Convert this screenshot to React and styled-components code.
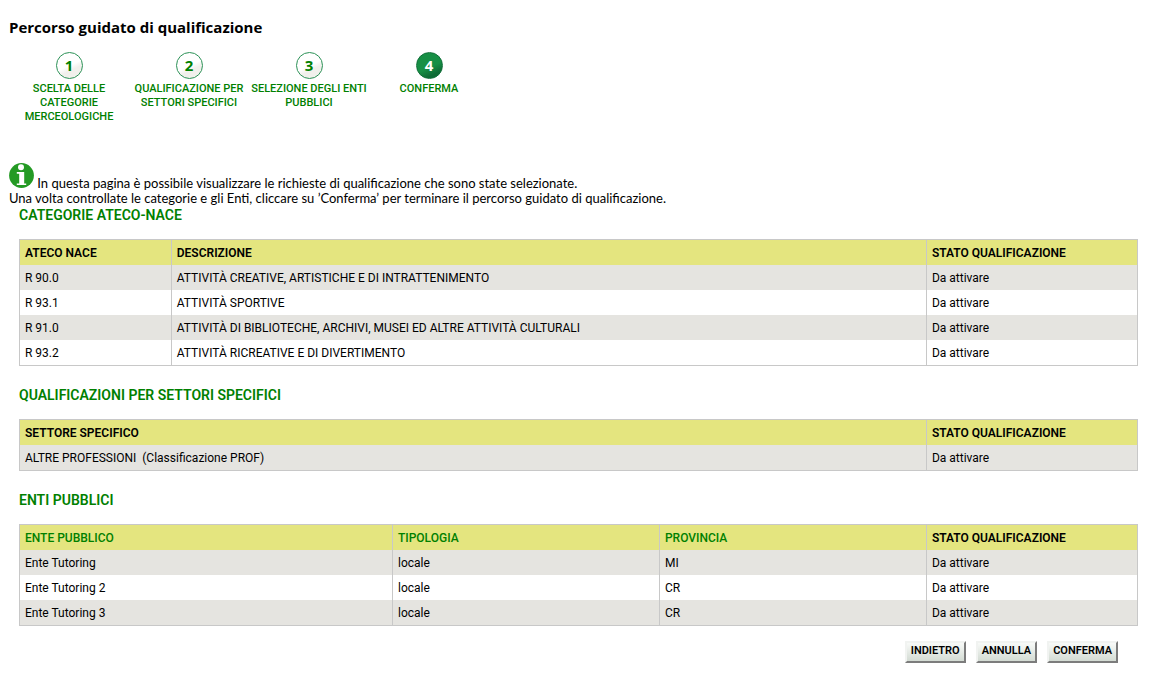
import React from 'react';
import styled, { createGlobalStyle } from 'styled-components';

const steps = [
	{ number: 1, label: 'SCELTA DELLE CATEGORIE MERCEOLOGICHE' },
	{ number: 2, label: 'QUALIFICAZIONE PER SETTORI SPECIFICI' },
	{ number: 3, label: 'SELEZIONE DEGLI ENTI PUBBLICI' },
	{ number: 4, label: 'CONFERMA', active: true },
];

const categories = [
	['R 90.0', 'ATTIVITÀ CREATIVE, ARTISTICHE E DI INTRATTENIMENTO', 'Da attivare'],
	['R 93.1', 'ATTIVITÀ SPORTIVE', 'Da attivare'],
	['R 91.0', 'ATTIVITÀ DI BIBLIOTECHE, ARCHIVI, MUSEI ED ALTRE ATTIVITÀ CULTURALI', 'Da attivare'],
	['R 93.2', 'ATTIVITÀ RICREATIVE E DI DIVERTIMENTO', 'Da attivare'],
];

const sectors = [['ALTRE PROFESSIONI \u00a0(Classificazione PROF)', 'Da attivare']];

const entities = [
	['Ente Tutoring', 'locale', 'MI', 'Da attivare'],
	['Ente Tutoring 2', 'locale', 'CR', 'Da attivare'],
	['Ente Tutoring 3', 'locale', 'CR', 'Da attivare'],
];

function DataTable({ title, columns, rows }) {
	return (
		<StyledSection>
			<StyledSectionTitle>{title}</StyledSectionTitle>
			<StyledTable aria-label={title}>
				<thead>
					<tr>
						{columns.map((column) => (
							<StyledHeaderCell key={column.label} scope="col" $width={column.width}>
								{column.sortable ? <StyledSortLink href="#">{column.label}</StyledSortLink> : column.label}
							</StyledHeaderCell>
						))}
					</tr>
				</thead>
				<tbody>
					{rows.map((row) => (
						<StyledRow key={row[0]}>
							{row.map((value, index) => (
								<StyledCell key={index}>{value}</StyledCell>
							))}
						</StyledRow>
					))}
				</tbody>
			</StyledTable>
		</StyledSection>
	);
}

function InfoIcon() {
	return (
		<StyledInfoIcon viewBox="0 0 25 25" aria-hidden="true">
			<circle cx="12.5" cy="12.5" r="12.4" fill="#249a24" />
			<circle cx="12" cy="4.2" r="3" fill="#fff" />
			<path d="M7.8 9h7.4v11.4h2V22H7.8v-1.6h2.4v-9.6H7.8z" fill="#fff" />
		</StyledInfoIcon>
	);
}

function App() {
	return (
		<StyledPage>
			<GlobalStyle />
			<StyledTitle>Percorso guidato di qualificazione</StyledTitle>

			<StyledSteps>
				{steps.map((step) => (
					<StyledStep key={step.number} aria-current={step.active ? 'step' : undefined}>
						<StyledStepNumber $active={step.active}>{step.number}</StyledStepNumber>
						<StyledStepLabel>{step.label}</StyledStepLabel>
					</StyledStep>
				))}
			</StyledSteps>

			<StyledIntro>
				<InfoIcon /> In questa pagina è possibile visualizzare le richieste di qualificazione che sono state
				selezionate.
				<br />
				Una volta controllate le categorie e gli Enti, cliccare su ’Conferma’ per terminare il percorso
				guidato di qualificazione.
			</StyledIntro>

			<StyledContent>
				<DataTable
					title="CATEGORIE ATECO-NACE"
					columns={[
						{ label: 'ATECO NACE', width: '13.5%' },
						{ label: 'DESCRIZIONE' },
						{ label: 'STATO QUALIFICAZIONE', width: '18.9%' },
					]}
					rows={categories}
				/>
				<DataTable
					title="QUALIFICAZIONI PER SETTORI SPECIFICI"
					columns={[{ label: 'SETTORE SPECIFICO' }, { label: 'STATO QUALIFICAZIONE', width: '18.9%' }]}
					rows={sectors}
				/>
				<DataTable
					title="ENTI PUBBLICI"
					columns={[
						{ label: 'ENTE PUBBLICO', sortable: true },
						{ label: 'TIPOLOGIA', width: '23.9%', sortable: true },
						{ label: 'PROVINCIA', width: '23.9%', sortable: true },
						{ label: 'STATO QUALIFICAZIONE', width: '18.9%' },
					]}
					rows={entities}
				/>
				<StyledActions>
					<StyledButton type="button">INDIETRO</StyledButton>
					<StyledButton type="button">ANNULLA</StyledButton>
					<StyledButton type="button">CONFERMA</StyledButton>
				</StyledActions>
			</StyledContent>
		</StyledPage>
	);
}

const GlobalStyle = createGlobalStyle`
	body {
		margin: 0;
		background-color: #fff;
		color: #000;
		font-family: Roboto, sans-serif;
		font-size: 12px;
		line-height: 15px;
	}

	* {
		box-sizing: border-box;
	}
`;

const StyledPage = styled.main`
	padding: 17px 20px 20px 9px;
`;

const StyledTitle = styled.h1`
	margin: 0;
	font-family: 'Open Sans', sans-serif;
	font-size: 15px;
	line-height: 20px;
	font-weight: 700;
`;

const StyledSteps = styled.ol`
	display: flex;
	list-style: none;
	margin: 0;
	padding: 15px 0 0;
	min-height: 120px;
`;

const StyledStep = styled.li`
	width: 120px;
	display: flex;
	flex-direction: column;
	align-items: center;
`;

const StyledStepNumber = styled.span`
	display: flex;
	align-items: center;
	justify-content: center;
	width: 27px;
	height: 27px;
	border: 1px solid ${(props) => (props.$active ? '#0f6f38' : '#2c9257')};
	border-radius: 50%;
	background: ${(props) =>
		props.$active
			? 'linear-gradient(155deg, #178f45 55%, #0e6a35 80%)'
			: 'linear-gradient(155deg, #fff 50%, #f1f0ec 65%)'};
	color: ${(props) => (props.$active ? '#fff' : '#008000')};
	font-family: 'Open Sans', sans-serif;
	font-size: 15px;
	font-weight: 700;
`;

const StyledStepLabel = styled.span`
	margin-top: 3px;
	color: #008000;
	font-size: 11px;
	line-height: 14px;
	font-weight: 500;
	text-align: center;
`;

const StyledIntro = styled.p`
	margin: 0;
	padding-top: 6px;
	font-family: Lato, sans-serif;
	font-size: 13px;
`;

const StyledInfoIcon = styled.svg`
	width: 25px;
	height: 25px;
	vertical-align: baseline;
`;

const StyledContent = styled.div`
	padding-left: 10px;
`;

const StyledSection = styled.section`
	margin-bottom: 20px;

	&:last-of-type {
		margin-bottom: 15px;
	}
`;

const StyledSectionTitle = styled.h2`
	margin: 0 0 15px;
	color: #008000;
	font-size: 14px;
	line-height: 18px;
	font-weight: 600;
`;

const StyledTable = styled.table`
	width: 100%;
	table-layout: fixed;
	border: 1px solid #c8c8c8;
	border-spacing: 0;
`;

const StyledHeaderCell = styled.th`
	width: ${(props) => props.$width || 'auto'};
	height: 25px;
	padding: 2px 5px 0;
	background-color: #e4e57f;
	text-align: left;
	font-weight: 600;

	& + & {
		border-left: 1px solid #c8c8c8;
	}
`;

const StyledSortLink = styled.a`
	color: #008000;
	font-weight: 500;
	text-decoration: none;
`;

const StyledRow = styled.tr`
	&:nth-child(odd) {
		background-color: #e5e4e0;
	}
`;

const StyledCell = styled.td`
	height: 25px;
	padding: 2px 5px 0;

	& + & {
		border-left: 1px solid #c8c8c8;
	}
`;

const StyledActions = styled.div`
	display: flex;
	justify-content: flex-end;
	gap: 10px;
	padding-right: 20px;
`;

const StyledButton = styled.button`
	height: 22px;
	padding: 0 4px 2px;
	border: 2px solid;
	border-color: #f1f3f1 #7c7c7c #7c7c7c #f1f3f1;
	background: linear-gradient(#f8faf8, #d3dbd3);
	color: #000;
	font-family: inherit;
	font-size: 11px;
	line-height: 14px;
	font-weight: 600;
`;

export default App;
